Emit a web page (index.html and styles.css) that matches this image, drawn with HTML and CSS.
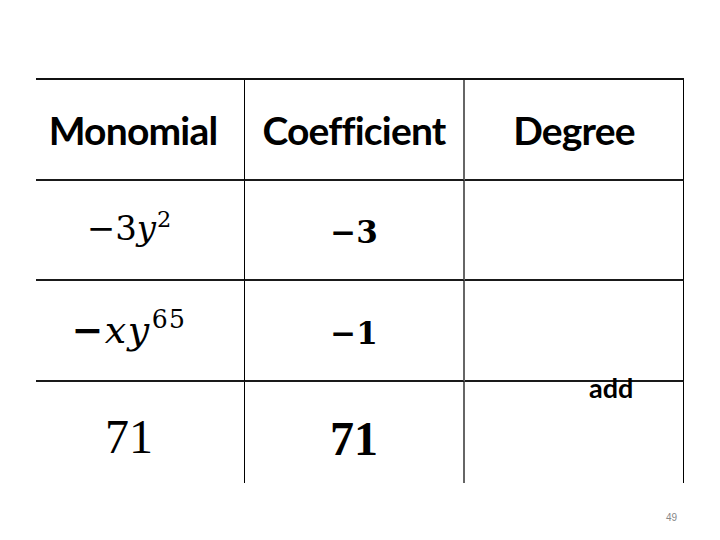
FILE: index.html
```html
<!DOCTYPE html>
<html lang="en">
<head>
  <meta charset="UTF-8" />
  <title>Monomials</title>
  <link rel="stylesheet" href="styles.css">
</head>
<body>
  <div class="slide">
    <div class="grid">
      <div class="cell head first">Monomial</div>
      <div class="cell head">Coefficient</div>
      <div class="cell head">Degree</div>

      <div class="cell math first">&minus;3<i>y</i><sup>2</sup></div>
      <div class="cell math bold">&minus;3</div>
      <div class="cell"></div>

      <div class="cell math first wide"><b>&minus;</b><i>xy</i><sup>65</sup></div>
      <div class="cell math bold">&minus;1</div>
      <div class="cell add-cell"><span class="note">add</span></div>

      <div class="cell math big first last">71</div>
      <div class="cell math big bold last">71</div>
      <div class="cell last"></div>
    </div>
    <div class="footer">49</div>
  </div>
</body>
</html>
```

FILE: styles.css
```css
body {
  margin: 0;
  background: #fff;
  color: #000;
}

.slide {
  width: 720px;
  height: 540px;
  padding: 78px 0 0 36px;
  box-sizing: border-box;
}

.grid {
  display: grid;
  grid-template-columns: 209px 220px 219px;
  grid-template-rows: 101px 100px 101px 101px;
  width: 648px;
  border-top: 2px solid #111;
}

.cell {
  display: flex;
  align-items: center;
  justify-content: center;
  box-sizing: border-box;
  border-right: 1px solid #000;
  border-bottom: 2px solid #1a1a1a;
}

.cell:nth-child(3n+2) {
  border-right: 2px solid #666;
}

.cell.last {
  border-bottom: none;
}

.head {
  font-family: Lato, "Open Sans", sans-serif;
  font-weight: 700;
  font-size: 39px;
  letter-spacing: -0.8px;
}

.head.first {
  padding-right: 14px;
}

.math {
  font-family: "DejaVu Serif", "Liberation Serif", serif;
  font-size: 34px;
  padding-bottom: 4px;
}

.math.first {
  padding-right: 22px;
}

.math.wide {
  font-size: 38px;
  padding-right: 22px;
  padding-bottom: 2px;
  letter-spacing: 1.5px;
}

.math sup {
  font-size: 0.66em;
  vertical-align: 0;
  position: relative;
  top: -0.4em;
  margin-left: 1px;
}

.math b {
  font-weight: 700;
}

.bold {
  font-weight: 700;
  font-size: 31px;
  padding-top: 4px;
  padding-bottom: 0;
}

.big {
  font-family: "Liberation Serif", serif;
  font-size: 48px;
  padding-top: 12px;
}

.add-cell {
  position: relative;
}

.note {
  position: absolute;
  left: 124px;
  bottom: -21px;
  font-family: Lato, "Open Sans", sans-serif;
  font-weight: 700;
  font-size: 27px;
  line-height: 1;
}

.footer {
  width: 641px;
  padding-top: 29px;
  text-align: right;
  font-family: "Liberation Sans", sans-serif;
  font-size: 10px;
  color: #888;
}
```
